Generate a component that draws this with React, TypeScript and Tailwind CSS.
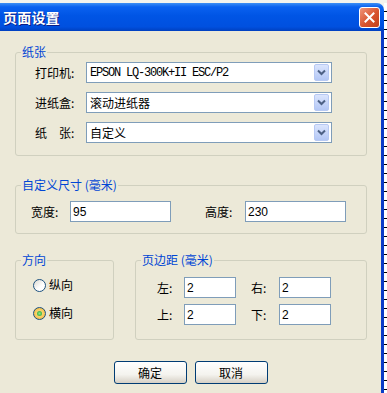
import React from 'react';

const Chevron = () => (
  <svg width="9" height="7" viewBox="0 0 9 7">
    <path d="M1 1.5 L4.5 5 L8 1.5" stroke="#4d6185" strokeWidth="2" fill="none" />
  </svg>
);

const Select = ({ value, mono }: { value: string; mono?: boolean }) => (
  <div className="flex h-[21px] w-[246px] items-center border border-[#7f9db9] bg-white pl-[3px] pr-[2px]">
    {mono ? (
      <span className="font-['Liberation_Mono',monospace] text-[12px] leading-[14px] tracking-[-1.2px] text-black">{value}</span>
    ) : (
      <span className="text-[12px] leading-[14px] text-black">{value}</span>
    )}
    <span className="ml-auto flex h-[17px] w-[15px] items-center justify-center rounded-[2px] border border-[#b7c9f4] bg-[linear-gradient(to_bottom,#dbe5fd,#b3c7f6)]">
      <Chevron />
    </span>
  </div>
);

const TextBox = ({ value, width }: { value: string; width: string }) => (
  <div className={`flex h-[21px] items-center border border-[#7f9db9] bg-white pl-[2px] font-['Liberation_Sans',sans-serif] text-[12px] leading-[14px] text-black ${width}`}>
    {value}
  </div>
);

const Radio = ({ checked, label }: { checked?: boolean; label: string }) => (
  <div className="flex h-[16px] items-center gap-[3px]">
    {checked ? (
      <span className="flex h-[13px] w-[13px] items-center justify-center rounded-full border border-[#1c5180] bg-[radial-gradient(circle,#fbe7a0_0%,#f5c149_70%,#e6a52c_100%)]">
        <span className="h-[5px] w-[5px] rounded-full bg-[radial-gradient(circle,#8de38d,#21a121)]" />
      </span>
    ) : (
      <span className="h-[13px] w-[13px] rounded-full border border-[#1c5180] bg-[linear-gradient(135deg,#dcd9d0,#ffffff_60%)]" />
    )}
    <span className="text-[12px] leading-[14px] text-black">{label}</span>
  </div>
);

const Group = ({ title, className, children }: { title: string; className: string; children: React.ReactNode }) => (
  <fieldset className={`rounded-[3px] border border-[#d0d0bf] p-0 ${className}`}>
    <legend className="ml-[5px] px-[1px] text-[12px] leading-[14px] text-[#0046d5]">{title}</legend>
    {children}
  </fieldset>
);

const XpButton = ({ label }: { label: string }) => (
  <button className="flex h-[23px] w-[73px] items-center justify-center rounded-[3px] border border-[#003c74] bg-[linear-gradient(to_bottom,#ffffff,#f4f3ee_60%,#d6d0c5)] text-[12px] leading-[14px] text-black">
    {label}
  </button>
);

const Label = ({ text, width }: { text: string; width: string }) => (
  <span className={`text-[12px] leading-[14px] text-black ${width}`}>{text}</span>
);

export default function App() {
  return (
    <div className="flex h-[393px] w-[387px] flex-col overflow-hidden bg-[#f4f3ee] font-['Noto_Sans_CJK_SC',sans-serif]">
      <div className="h-[3px] shrink-0" />
      <div className="flex flex-1">
        <div className="flex w-[384px] flex-col">
          {/* title bar */}
          <div className="flex h-[28px] shrink-0 items-center rounded-tr-[7px] bg-[linear-gradient(to_bottom,#3d8ff5_0%,#0a61f0_14%,#0055e5_45%,#0050df_85%,#0040c0_100%)] pl-[3px] pr-[4px]">
            <span className="text-[14px] font-bold leading-[16px] tracking-[0.2px] text-white [text-shadow:1px_1px_0_#0c1e86]">页面设置</span>
            <span className="ml-auto flex h-[21px] w-[21px] items-center justify-center rounded-[3px] border border-white bg-[linear-gradient(135deg,#f0957a,#d8532e_55%,#c2401c)]">
              <svg width="11" height="11" viewBox="0 0 11 11">
                <path d="M1.5 1.5 L9.5 9.5 M9.5 1.5 L1.5 9.5" stroke="#fff" strokeWidth="2" strokeLinecap="square" />
              </svg>
            </span>
          </div>

          {/* body */}
          <div className="flex flex-1 flex-col border-r-[3px] border-[#0a3cc8] bg-[#ece9d8] pl-[15px] pt-[14px]">
            <Group title="纸张" className="w-[352px]">
              <div className="flex flex-col gap-[9px] pb-[12px] pl-[19px] pt-[3px]">
                <div className="flex items-center">
                  <Label text="打印机:" width="w-[51px]" />
                  <Select value="EPSON LQ-300K+II ESC/P2" mono />
                </div>
                <div className="flex items-center">
                  <Label text="进纸盒:" width="w-[51px]" />
                  <Select value="滚动进纸器" />
                </div>
                <div className="flex items-center">
                  <Label text="纸　张:" width="w-[51px]" />
                  <Select value="自定义" />
                </div>
              </div>
            </Group>

            <Group title="自定义尺寸 (毫米)" className="mt-[22px] w-[352px]">
              <div className="flex items-center pb-[11px] pl-[15px] pt-[9px]">
                <Label text="宽度:" width="w-[39px]" />
                <TextBox value="95" width="w-[101px]" />
                <Label text="高度:" width="ml-[34px] w-[40px]" />
                <TextBox value="230" width="w-[101px]" />
              </div>
            </Group>

            <div className="mt-[19px] flex gap-[21px]">
              <Group title="方向" className="w-[99px]">
                <div className="flex flex-col gap-[12px] pl-[17px] pt-[10px]">
                  <Radio label="纵向" />
                  <Radio label="横向" checked />
                </div>
              </Group>
              <Group title="页边距 (毫米)" className="w-[232px]">
                <div className="flex flex-col gap-[6px] pb-[14px] pl-[21px] pt-[10px]">
                  <div className="flex items-center">
                    <Label text="左:" width="w-[27px]" />
                    <TextBox value="2" width="w-[52px]" />
                    <Label text="右:" width="ml-[15px] w-[28px]" />
                    <TextBox value="2" width="w-[52px]" />
                  </div>
                  <div className="flex items-center">
                    <Label text="上:" width="w-[27px]" />
                    <TextBox value="2" width="w-[52px]" />
                    <Label text="下:" width="ml-[15px] w-[28px]" />
                    <TextBox value="2" width="w-[52px]" />
                  </div>
                </div>
              </Group>
            </div>

            <div className="mt-[21px] flex justify-center gap-[8px] pr-[15px]">
              <XpButton label="确定" />
              <XpButton label="取消" />
            </div>
          </div>
        </div>
        {/* window behind, cut off at the right */}
        <div className="w-[3px] bg-[repeating-linear-gradient(to_bottom,#ffffff_0px,#ffffff_8px,#000000_8px,#000000_9px)]" />
      </div>
    </div>
  );
}
